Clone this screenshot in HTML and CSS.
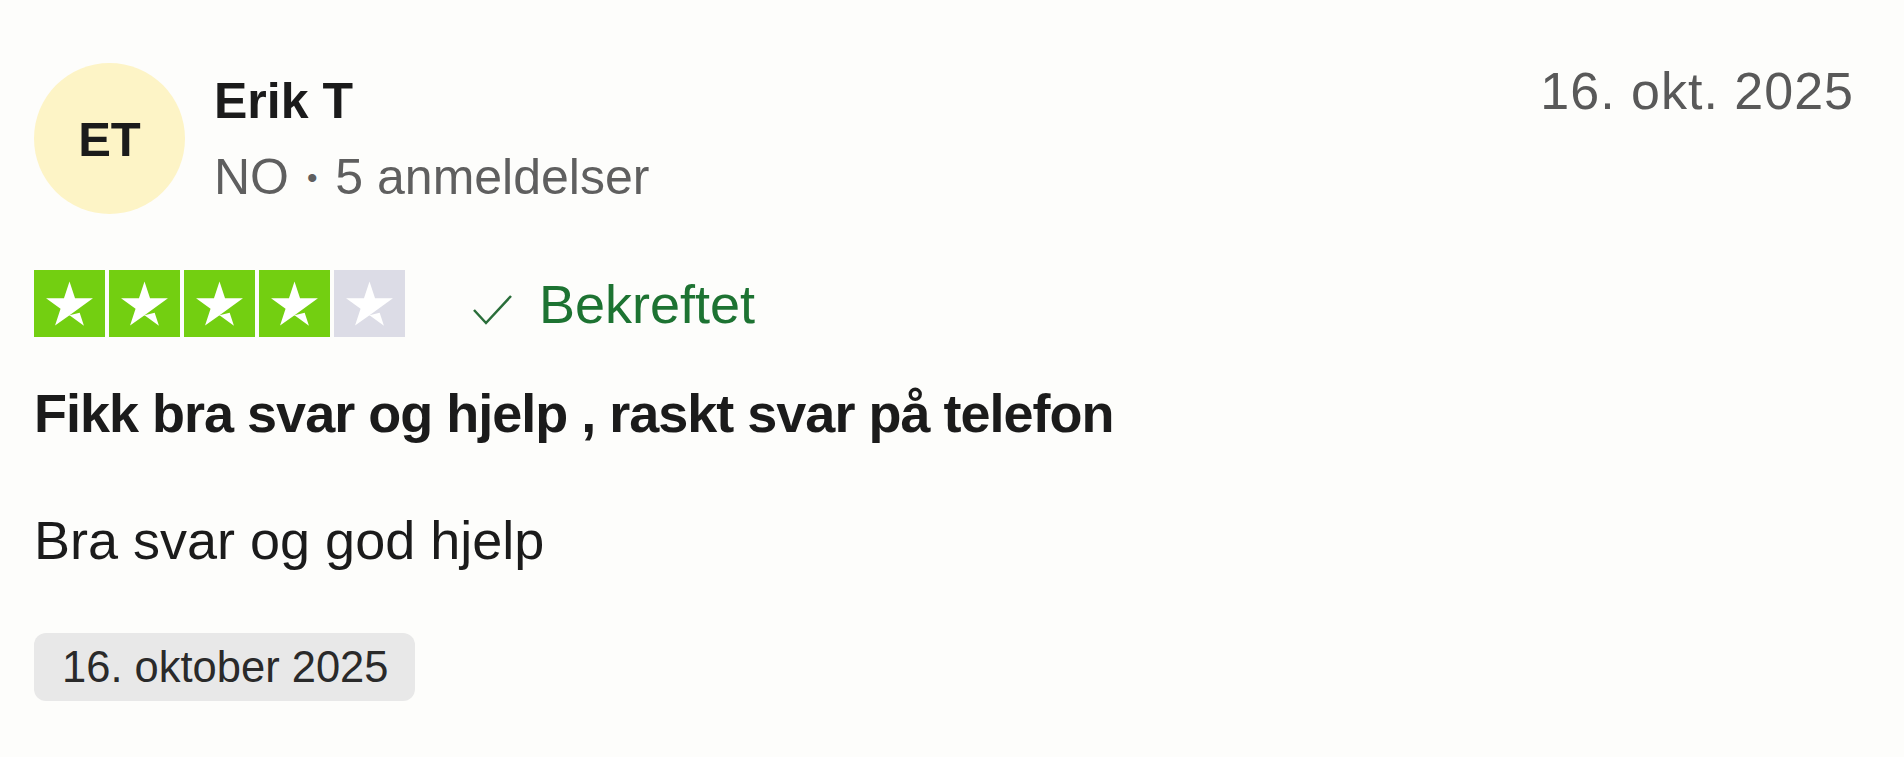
FILE: index.html
```html
<!DOCTYPE html>
<html lang="no">
<head>
<meta charset="utf-8">
<title>Anmeldelse</title>
<link rel="stylesheet" href="styles.css">
</head>
<body>
<article class="review">
  <header class="head">
    <div class="avatar">ET</div>
    <div class="who">
      <div class="name">Erik T</div>
      <div class="meta">NO <span class="dot">•</span> 5 anmeldelser</div>
    </div>
    <time class="date">16. okt. 2025</time>
  </header>
  <div class="rating-row">
    <div class="stars">
      <span class="star on"><svg viewBox="0 0 46 46"><path d="M23 31.04l6.99-1.77 2.92 9-9.91-7.23zm16.1-11.63H26.8L23 7.83l-3.8 11.58H6.9l9.96 7.17-3.78 11.58 9.96-7.17 6.13-4.41 9.93-7.17z"/></svg></span>
      <span class="star on"><svg viewBox="0 0 46 46"><path d="M23 31.04l6.99-1.77 2.92 9-9.91-7.23zm16.1-11.63H26.8L23 7.83l-3.8 11.58H6.9l9.96 7.17-3.78 11.58 9.96-7.170 6.13-4.41 9.93-7.17z"/></svg></span>
      <span class="star on"><svg viewBox="0 0 46 46"><path d="M23 31.04l6.99-1.77 2.92 9-9.91-7.23zm16.1-11.63H26.8L23 7.83l-3.8 11.58H6.9l9.96 7.17-3.78 11.58 9.96-7.17 6.13-4.41 9.93-7.17z"/></svg></span>
      <span class="star on"><svg viewBox="0 0 46 46"><path d="M23 31.04l6.99-1.77 2.92 9-9.91-7.23zm16.1-11.63H26.8L23 7.83l-3.8 11.58H6.9l9.96 7.17-3.78 11.58 9.96-7.17 6.13-4.41 9.93-7.17z"/></svg></span>
      <span class="star off"><svg viewBox="0 0 46 46"><path d="M23 31.04l6.99-1.77 2.92 9-9.91-7.23zm16.1-11.63H26.8L23 7.83l-3.8 11.58H6.9l9.96 7.17-3.78 11.58 9.96-7.17 6.13-4.41 9.93-7.17z"/></svg></span>
    </div>
    <div class="verified">
      <svg class="check" viewBox="0 0 41 33"><polyline points="2,17 14,30 39,3"/></svg>
      <span>Bekreftet</span>
    </div>
  </div>
  <h2 class="title">Fikk bra svar og hjelp , raskt svar på telefon</h2>
  <p class="text">Bra svar og god hjelp</p>
  <div class="chip">16. oktober 2025</div>
</article>
</body>
</html>
```
FILE: styles.css
```css
html, body {
  margin: 0;
  padding: 0;
  background: #fdfdfb;
}
body {
  font-family: "Liberation Sans", Arial, sans-serif;
  color: #1b1b1b;
}
.review {
  padding: 60px 50px 0 34px;
}
.head {
  display: flex;
  align-items: flex-start;
}
.avatar {
  width: 151px;
  height: 151px;
  margin-top: 3px;
  border-radius: 50%;
  background: #fdf4c6;
  display: flex;
  align-items: center;
  justify-content: center;
  font-weight: 700;
  font-size: 49px;
  color: #1b1b1b;
  flex-shrink: 0;
}
.who {
  margin-left: 29px;
  margin-top: 11px;
  flex: 1;
}
.name {
  font-size: 50px;
  font-weight: 700;
  line-height: 60px;
}
.meta {
  margin-top: 16px;
  font-size: 50px;
  line-height: 60px;
  color: #5f5f5f;
}
.dot {
  font-size: 30px;
  vertical-align: 6px;
  margin: 0 4px;
}
.date {
  font-size: 52px;
  line-height: 62px;
  letter-spacing: 1px;
  color: #595959;
}
.rating-row {
  margin-top: 56px;
  display: flex;
  align-items: center;
  height: 67px;
}
.stars {
  display: flex;
  gap: 4px;
}
.star {
  width: 71px;
  height: 67px;
  display: flex;
  align-items: center;
  justify-content: center;
}
.star.on { background: #73cf11; }
.star.off { background: #dcdce6; }
.star svg {
  width: 67px;
  height: 67px;
  fill: #ffffff;
}
.verified {
  margin-left: 67px;
  display: flex;
  align-items: center;
  color: #1d7332;
  font-size: 54px;
  line-height: 64px;
}
.check {
  width: 41px;
  height: 33px;
  margin-right: 26px;
  margin-top: 12px;
  fill: none;
  stroke: #2a6e3a;
  stroke-width: 2.5;
}
.title {
  margin: 44px 0 0;
  font-size: 54px;
  line-height: 65px;
  font-weight: 700;
  letter-spacing: -1px;
}
.text {
  margin: 62px 0 0;
  font-size: 54px;
  line-height: 65px;
}
.chip {
  display: inline-block;
  margin-top: 60px;
  background: #e8e8e8;
  border-radius: 12px;
  padding: 0 26px 0 28px;
  height: 68px;
  line-height: 68px;
  font-size: 43.5px;
  color: #2a2a2a;
}
```
